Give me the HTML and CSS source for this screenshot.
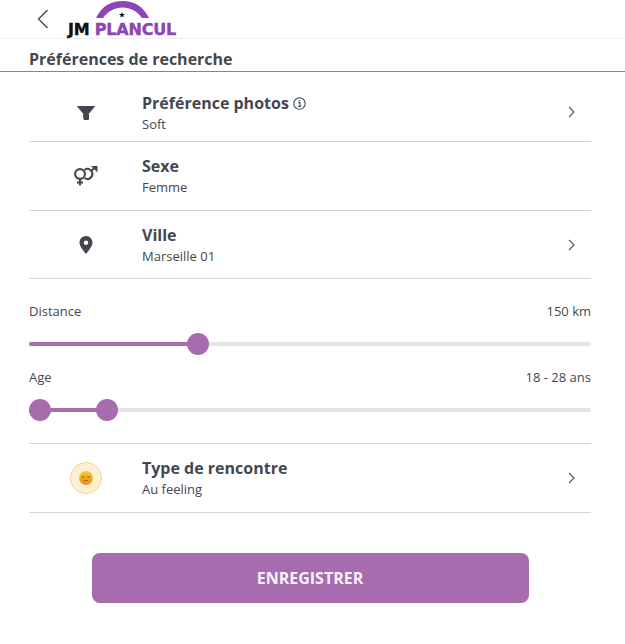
FILE: index.html
```html
<!DOCTYPE html>
<html lang="fr">

<head>
    <meta charset="UTF-8">
    <meta name="viewport" content="width=device-width, initial-scale=1.0">
    <title>Préférences de recherche</title>
    <link rel="stylesheet" href="styles.css">
</head>

<body>
    <header class="topbar">
        <svg class="back" width="12" height="20" viewBox="0 0 12 20">
            <path d="M10.5 1 L1.5 10 L10.5 19" fill="none" stroke="#444" stroke-width="1.3" />
        </svg>
        <div class="logo">
            <svg class="arch" width="53" height="19" viewBox="0 0 53 19">
                <path d="M0 18 C6 6 15 1 26.5 1 C38 1 47 6 53 18 L46 18 C41 11 34 7.500 26.500 7.500 C19 7.500 12 11 7 18 Z" fill="#8e44b5" />
                <path d="M26 12 L26.800 14.100 L29 14.100 L27.200 15.400 L27.900 17.500 L26 16.200 L24.100 17.500 L24.800 15.400 L23 14.100 L25.200 14.100 Z" fill="#111" />
            </svg>
            <div class="logo-text"><span class="logo-jm">JM</span> <span class="logo-name">PLANCUL</span></div>
        </div>
    </header>

    <h1 class="page-title">Préférences de recherche</h1>

    <main class="content">
        <div class="row row-first">
            <div class="row-icon">
                <svg width="20" height="16" viewBox="0 0 20 16">
                    <path d="M1.500 1.500 H18.500 L12.500 8.500 V14.500 H8 L7.500 8.500 Z" fill="#44474f" stroke="#44474f" stroke-linejoin="round" />
                </svg>
            </div>
            <div class="row-text">
                <div class="row-title">Préférence photos
                    <svg class="info" width="13" height="13" viewBox="0 0 13 13">
                        <circle cx="6.5" cy="6.5" r="5.7" fill="none" stroke="#44474f" stroke-width="1.1" />
                        <path d="M5.4 5.6 H7 V9.3 M5.2 9.4 H8.2" fill="none" stroke="#44474f" stroke-width="1.1" />
                        <circle cx="6.5" cy="3.7" r="0.8" fill="#44474f" />
                    </svg>
                </div>
                <div class="row-sub">Soft</div>
            </div>
            <svg class="chevron" width="7" height="12" viewBox="0 0 7 12">
                <path d="M1 1 L6 6 L1 11" fill="none" stroke="#555" stroke-width="1.1" />
            </svg>
        </div>

        <div class="row">
            <div class="row-icon">
                <svg width="25" height="20" viewBox="0 0 25 20">
                    <g fill="none" stroke="#44474f" stroke-width="2.1">
                        <circle cx="7" cy="8" r="4.900" />
                        <path d="M7 13 V19.500 M4 16.500 H10" />
                        <path d="M11.500 3.800 A5 5 0 1 1 11.600 12.200" />
                        <path d="M18 5 L22 1.500" />
                    </g>
                    <path d="M18 0 H24.500 V6.500 Z" fill="#44474f" />
                </svg>
            </div>
            <div class="row-text">
                <div class="row-title">Sexe</div>
                <div class="row-sub">Femme</div>
            </div>
        </div>

        <div class="row row-short">
            <div class="row-icon">
                <svg width="14" height="18" viewBox="0 0 14 18">
                    <path fill-rule="evenodd" d="M7 0 C3 0 .5 3 .5 6.500 C.5 10.500 5 15.500 7 18 C9 15.500 13.500 10.500 13.500 6.500 C13.500 3 11 0 7 0 Z M7 4.500 A2.200 2.200 0 1 1 7 8.900 A2.200 2.200 0 1 1 7 4.500 Z" fill="#44474f" />
                </svg>
            </div>
            <div class="row-text">
                <div class="row-title">Ville</div>
                <div class="row-sub">Marseille 01</div>
            </div>
            <svg class="chevron" width="7" height="12" viewBox="0 0 7 12">
                <path d="M1 1 L6 6 L1 11" fill="none" stroke="#555" stroke-width="1.1" />
            </svg>
        </div>

        <section class="sliders">
            <div class="slider-block">
                <div class="slider-head"><span>Distance</span><span>150 km</span></div>
                <div class="track">
                    <div class="fill" style="left: 0; width: 169px"></div>
                    <div class="thumb" style="left: 158px"></div>
                </div>
            </div>
            <div class="slider-block">
                <div class="slider-head"><span>Age</span><span>18 - 28 ans</span></div>
                <div class="track">
                    <div class="fill" style="left: 11px; width: 67px"></div>
                    <div class="thumb" style="left: 0"></div>
                    <div class="thumb" style="left: 67px"></div>
                </div>
            </div>
        </section>

        <div class="row row-top">
            <div class="row-icon">
                <div class="mood">
                    <svg width="14" height="14" viewBox="0 0 14 14">
                        <defs>
                            <linearGradient id="face" x1="0" y1="0" x2="0" y2="1">
                                <stop offset="0" stop-color="#f8c834" />
                                <stop offset="1" stop-color="#ee8f1c" />
                            </linearGradient>
                        </defs>
                        <circle cx="7" cy="7" r="6.900" fill="url(#face)" />
                        <path d="M2.800 5.800 Q4.300 6.800 5.800 5.800 M8.200 5.800 Q9.700 6.800 11.200 5.800" fill="none" stroke="#8a5a10" stroke-width="1" />
                        <path d="M4.800 9.700 Q7 8.700 9.200 9.700" fill="none" stroke="#8a5a10" stroke-width="1" />
                    </svg>
                </div>
            </div>
            <div class="row-text">
                <div class="row-title">Type de rencontre</div>
                <div class="row-sub">Au feeling</div>
            </div>
            <svg class="chevron" width="7" height="12" viewBox="0 0 7 12">
                <path d="M1 1 L6 6 L1 11" fill="none" stroke="#555" stroke-width="1.1" />
            </svg>
        </div>

        <div class="actions">
            <button class="save">ENREGISTRER</button>
        </div>
    </main>
</body>

</html>
```

FILE: styles.css
```css
body {
    margin: 0;
    background: #fff;
    color: #44474f;
    font-family: "Open Sans", sans-serif;
}

.topbar {
    display: flex;
    height: 38px;
    border-bottom: 1px solid #f0f0f0;
    padding-left: 37px;
}

.back {
    margin-top: 9px;
}

.logo {
    margin-left: 18px;
    display: flex;
    flex-direction: column;
    align-items: center;
    width: 110px;
}

.arch {
    display: block;
}

.logo-text {
    margin-top: 2px;
    font-family: "DejaVu Sans", sans-serif;
    font-weight: bold;
    font-size: 16px;
    line-height: 17px;
    white-space: nowrap;
    letter-spacing: -0.2px;
    -webkit-text-stroke: 0.4px;
}

.logo-jm {
    color: #111;
}

.logo-name {
    color: #8e44b5;
}

.page-title {
    margin: 0;
    padding-left: 29px;
    height: 32px;
    line-height: 40px;
    font-size: 16px;
    font-weight: 700;
    border-bottom: 1px solid #a66cae;
}

.content {
    margin: 0 34px 0 29px;
}

.row {
    display: flex;
    align-items: center;
    height: 68px;
    border-bottom: 1px solid #d4d4d4;
}

.row-first {
    height: 56px;
    margin-top: 13px;
}

.row-first .chevron {
    margin-bottom: 2px;
}

.row-first .row-icon {
    margin-bottom: 1px;
}

.row-short {
    height: 67px;
}

.row-top {
    border-top: 1px solid #d4d4d4;
}

.row-icon {
    width: 113px;
    display: flex;
    justify-content: center;
    flex-shrink: 0;
}

.row-text {
    flex: 1;
}

.row-title {
    font-size: 16px;
    font-weight: 700;
    line-height: 22px;
}

.info {
    vertical-align: -1px;
}

.row-sub {
    font-size: 13px;
    line-height: 20px;
}

.chevron {
    margin-right: 16px;
}

.sliders {
    padding: 22px 0 31px;
}

.slider-block {
    margin-bottom: 21px;
}

.slider-block:last-child {
    margin-bottom: 0;
}

.slider-head {
    display: flex;
    justify-content: space-between;
    font-size: 13px;
    line-height: 20px;
    margin-bottom: 21px;
}

.track {
    position: relative;
    height: 4px;
    background: #e4e4e4;
    border-radius: 2px;
}

.fill {
    position: absolute;
    top: 0;
    height: 4px;
    background: #a66cae;
    border-radius: 2px;
}

.thumb {
    position: absolute;
    top: -9px;
    width: 22px;
    height: 22px;
    border-radius: 50%;
    background: #a66cae;
}

.mood {
    width: 30px;
    height: 30px;
    border: 1px solid #f4d58f;
    border-radius: 50%;
    background: #fdf0d2;
    display: flex;
    align-items: center;
    justify-content: center;
}

.mood svg {
    display: block;
}

.actions {
    display: flex;
    justify-content: center;
    padding-top: 40px;
}

.save {
    width: 437px;
    height: 50px;
    border: none;
    border-radius: 8px;
    background: #a66cae;
    color: #f8f2f9;
    font-family: "Open Sans", sans-serif;
    font-size: 16px;
    font-weight: 700;
}
```
